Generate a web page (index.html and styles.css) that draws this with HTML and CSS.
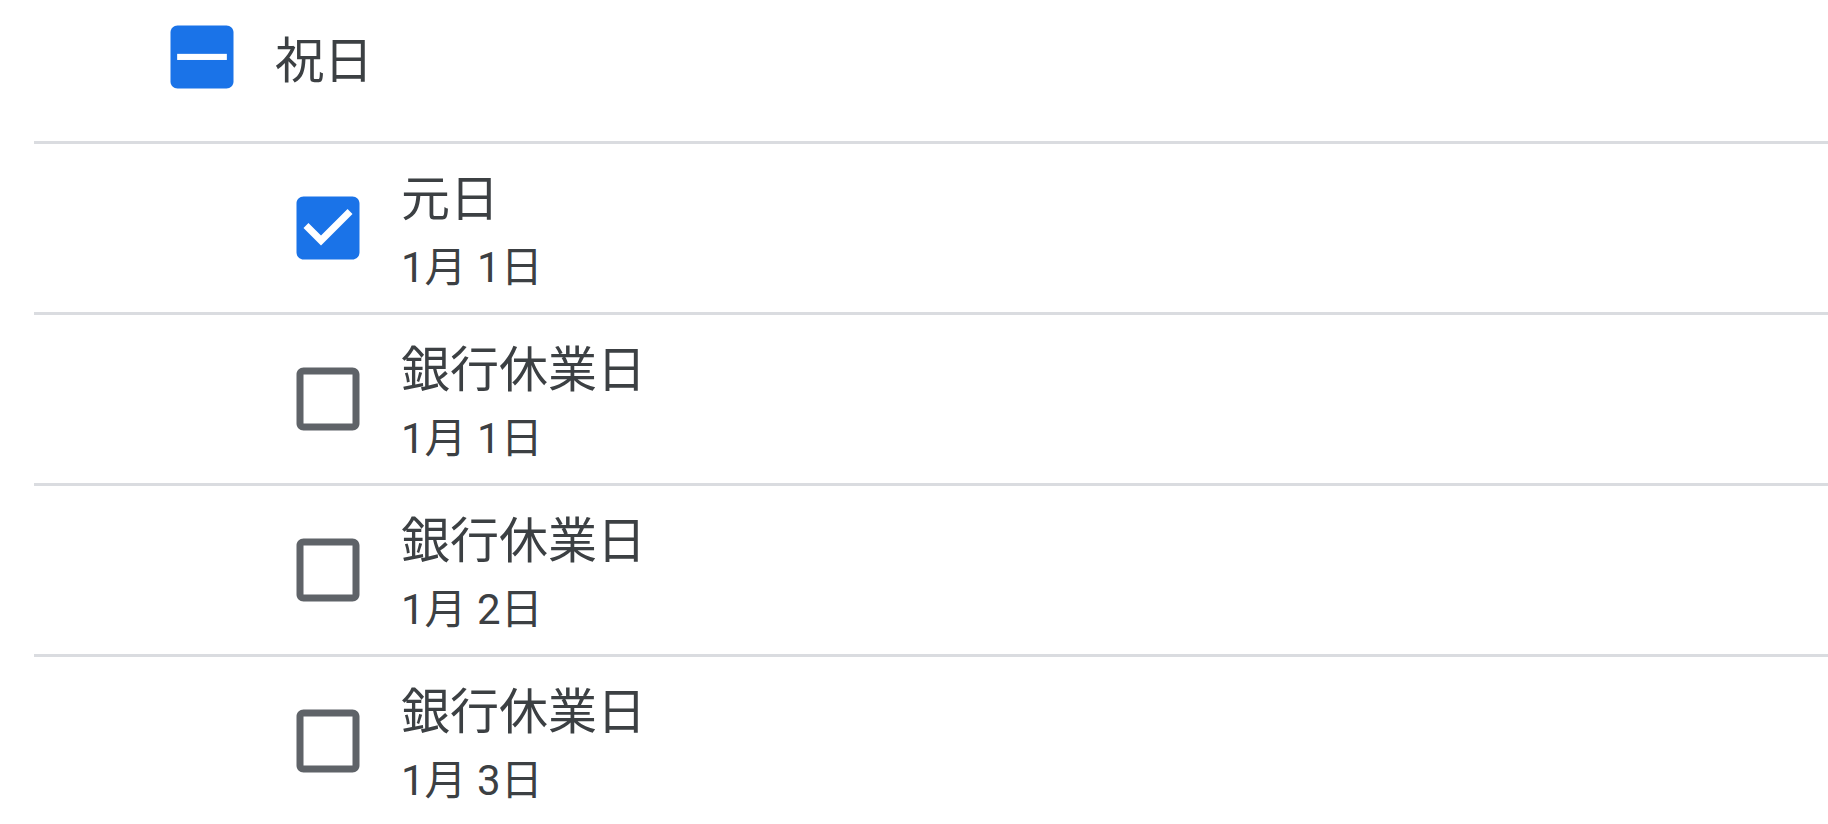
FILE: index.html
```html
<!DOCTYPE html>
<html lang="ja">
<head>
<meta charset="utf-8">
<title>祝日</title>
<link rel="stylesheet" href="styles.css">
</head>
<body>
<div class="list">
  <div class="group-header">
    <svg class="cb cb-header" viewBox="0 0 24 24" aria-hidden="true">
      <path fill="#1a73e8" d="M19 3H5c-1.1 0-2 .9-2 2v14c0 1.1.9 2 2 2h14c1.1 0 2-.9 2-2V5c0-1.1-.9-2-2-2z"/>
      <rect fill="#ffffff" x="4.9" y="11.1" width="14.2" height="1.75"/>
    </svg>
    <div class="group-title">祝日</div>
  </div>

  <div class="row">
    <svg class="cb" viewBox="0 0 24 24" aria-hidden="true">
      <path fill="#1a73e8" d="M19 3H5c-1.11 0-2 .9-2 2v14c0 1.1.89 2 2 2h14c1.11 0 2-.9 2-2V5c0-1.1-.89-2-2-2zm-9 14l-5-5 1.41-1.41L10 14.17l7.59-7.59L19 8l-9 9z"/>
    </svg>
    <div class="text">
      <div class="title">元日</div>
      <div class="date">1月 1日</div>
    </div>
  </div>

  <div class="row">
    <svg class="cb" viewBox="0 0 24 24" aria-hidden="true">
      <path fill="#5f6368" d="M19 5v14H5V5h14m0-2H5c-1.1 0-2 .9-2 2v14c0 1.1.9 2 2 2h14c1.1 0 2-.9 2-2V5c0-1.1-.9-2-2-2z"/>
    </svg>
    <div class="text">
      <div class="title">銀行休業日</div>
      <div class="date">1月 1日</div>
    </div>
  </div>

  <div class="row">
    <svg class="cb" viewBox="0 0 24 24" aria-hidden="true">
      <path fill="#5f6368" d="M19 5v14H5V5h14m0-2H5c-1.1 0-2 .9-2 2v14c0 1.1.9 2 2 2h14c1.1 0 2-.9 2-2V5c0-1.1-.9-2-2-2z"/>
    </svg>
    <div class="text">
      <div class="title">銀行休業日</div>
      <div class="date">1月 2日</div>
    </div>
  </div>

  <div class="row">
    <svg class="cb" viewBox="0 0 24 24" aria-hidden="true">
      <path fill="#5f6368" d="M19 5v14H5V5h14m0-2H5c-1.1 0-2 .9-2 2v14c0 1.1.9 2 2 2h14c1.1 0 2-.9 2-2V5c0-1.1-.9-2-2-2z"/>
    </svg>
    <div class="text">
      <div class="title">銀行休業日</div>
      <div class="date">1月 3日</div>
    </div>
  </div>
</div>
</body>
</html>
```

FILE: styles.css
```css
html, body {
  margin: 0;
  padding: 0;
  background: #ffffff;
}

body {
  font-family: Roboto, "Noto Sans CJK JP", sans-serif;
  color: #3c4043;
  overflow: hidden;
}

.list {
  margin-left: 34px;
}

.group-header {
  display: flex;
  align-items: flex-start;
  height: 141px;
  padding-left: 126px;
  box-sizing: border-box;
}

.cb {
  width: 84px;
  height: 84px;
  flex: none;
  display: block;
}

.cb-header {
  margin-top: 15px;
}

.group-title {
  margin-left: 31px;
  padding-top: 30px;
  font-size: 49px;
  line-height: 64px;
}

.row {
  display: flex;
  align-items: flex-start;
  height: 171px;
  box-sizing: border-box;
  border-top: 3px solid #dadce0;
  padding-left: 252px;
}

.row .cb {
  margin-top: 42px;
}

.text {
  margin-left: 31px;
  padding-top: 24px;
}

.title {
  font-size: 49px;
  line-height: 64px;
}

.date {
  font-size: 42px;
  line-height: 56px;
  margin-top: 8px;
}
```
